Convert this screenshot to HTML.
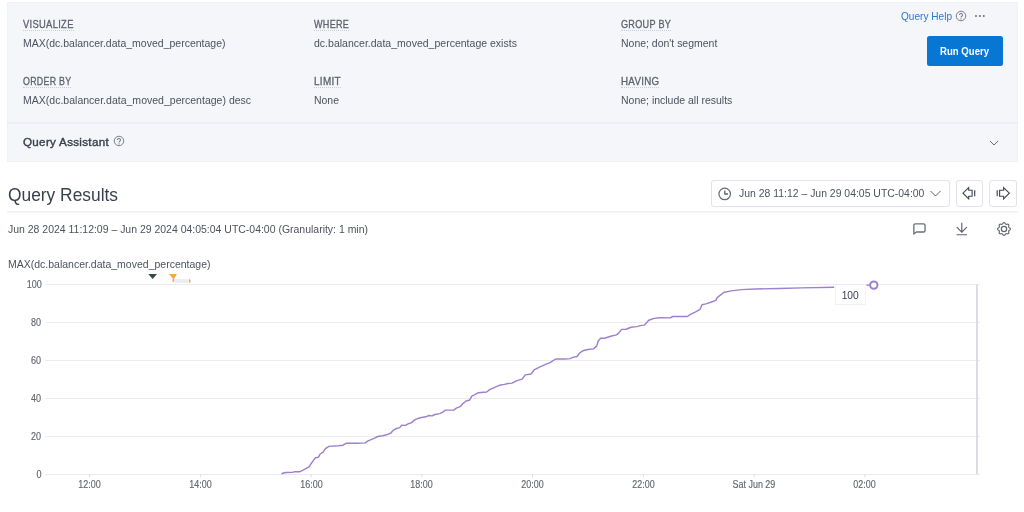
<!DOCTYPE html>
<html><head><meta charset="utf-8"><style>
html,body{margin:0;padding:0;width:1024px;height:512px;overflow:hidden;background:#fff;}
body{position:relative;font-family:"Liberation Sans",sans-serif;}
.t{position:absolute;white-space:nowrap;}
#w{position:absolute;left:0;top:0;width:1024px;height:512px;background:#fff;filter:blur(0.45px);}
</style></head><body><div id="w">
<div style="position:absolute;left:7px;top:2px;width:1011px;height:159.5px;background:#f5f6fa;box-sizing:border-box;border:1px solid #f1f2f6;"></div>
<svg style="position:absolute;left:0;top:0" width="1024" height="512"><line x1="7" y1="123" x2="1018" y2="123" stroke="#e5e7ed" stroke-width="1"/><line x1="7" y1="211.9" x2="1018" y2="211.9" stroke="#e7e9ef" stroke-width="1"/></svg>
<div class="t" style="left:23.00px;top:17.50px;font-size:10.5px;line-height:12.6px;color:#5d626d;font-weight:400;transform:scaleX(0.8919);transform-origin:left top;-webkit-text-stroke:0.3px #5d626d;letter-spacing:0.35px;">VISUALIZE</div>
<div style="position:absolute;left:23.0px;top:29.8px;width:50.7px;height:0;border-top:1px dotted #c9ccd4;"></div>
<div class="t" style="left:314.10px;top:17.50px;font-size:10.5px;line-height:12.6px;color:#5d626d;font-weight:400;transform:scaleX(0.8618);transform-origin:left top;-webkit-text-stroke:0.3px #5d626d;letter-spacing:0.35px;">WHERE</div>
<div style="position:absolute;left:314.1px;top:29.8px;width:35.2px;height:0;border-top:1px dotted #c9ccd4;"></div>
<div class="t" style="left:620.70px;top:17.50px;font-size:10.5px;line-height:12.6px;color:#5d626d;font-weight:400;transform:scaleX(0.8648);transform-origin:left top;-webkit-text-stroke:0.3px #5d626d;letter-spacing:0.35px;">GROUP BY</div>
<div style="position:absolute;left:620.7px;top:29.8px;width:50.2px;height:0;border-top:1px dotted #c9ccd4;"></div>
<div class="t" style="left:23.00px;top:74.50px;font-size:10.5px;line-height:12.6px;color:#5d626d;font-weight:400;transform:scaleX(0.8395);transform-origin:left top;-webkit-text-stroke:0.3px #5d626d;letter-spacing:0.35px;">ORDER BY</div>
<div style="position:absolute;left:23.0px;top:86.8px;width:48.4px;height:0;border-top:1px dotted #c9ccd4;"></div>
<div class="t" style="left:314.10px;top:74.50px;font-size:10.5px;line-height:12.6px;color:#5d626d;font-weight:400;transform:scaleX(0.9443);transform-origin:left top;-webkit-text-stroke:0.3px #5d626d;letter-spacing:0.35px;">LIMIT</div>
<div style="position:absolute;left:314.1px;top:86.8px;width:27.0px;height:0;border-top:1px dotted #c9ccd4;"></div>
<div class="t" style="left:620.70px;top:74.50px;font-size:10.5px;line-height:12.6px;color:#5d626d;font-weight:400;transform:scaleX(0.9260);transform-origin:left top;-webkit-text-stroke:0.3px #5d626d;letter-spacing:0.35px;">HAVING</div>
<div style="position:absolute;left:620.7px;top:86.8px;width:38.5px;height:0;border-top:1px dotted #c9ccd4;"></div>
<div class="t" style="left:22.90px;top:37.20px;font-size:11px;line-height:13.2px;color:#4d525c;font-weight:400;transform:scaleX(0.9543);transform-origin:left top;">MAX(dc.balancer.data_moved_percentage)</div>
<div class="t" style="left:314.00px;top:37.20px;font-size:11px;line-height:13.2px;color:#4d525c;font-weight:400;transform:scaleX(0.9562);transform-origin:left top;">dc.balancer.data_moved_percentage exists</div>
<div class="t" style="left:620.70px;top:37.20px;font-size:11px;line-height:13.2px;color:#4d525c;font-weight:400;transform:scaleX(0.9518);transform-origin:left top;">None; don't segment</div>
<div class="t" style="left:22.90px;top:94.40px;font-size:11px;line-height:13.2px;color:#4d525c;font-weight:400;transform:scaleX(0.9565);transform-origin:left top;">MAX(dc.balancer.data_moved_percentage) desc</div>
<div class="t" style="left:314.00px;top:94.40px;font-size:11px;line-height:13.2px;color:#4d525c;font-weight:400;transform:scaleX(0.9507);transform-origin:left top;">None</div>
<div class="t" style="left:620.70px;top:94.40px;font-size:11px;line-height:13.2px;color:#4d525c;font-weight:400;transform:scaleX(0.9529);transform-origin:left top;">None; include all results</div>
<div class="t" style="left:901.20px;top:10.30px;font-size:10.5px;line-height:12.6px;color:#2a78cc;font-weight:400;transform:scaleX(0.9603);transform-origin:left top;">Query Help</div>
<svg style="position:absolute;left:954.5px;top:10px" width="12" height="12" viewBox="0 0 12 12"><circle cx="6" cy="6" r="4.75" fill="none" stroke="#7b7f89" stroke-width="1"/><path d="M4.5 4.9 A1.5 1.5 0 1 1 6.6 6.3 Q6.1 6.6 6.1 7.5" fill="none" stroke="#7b7f89" stroke-width="1.05"/><circle cx="6.05" cy="8.9" r="0.65" fill="#7b7f89"/></svg>
<svg style="position:absolute;left:973px;top:13px" width="14" height="6" viewBox="0 0 14 6"><circle cx="3" cy="3" r="0.95" fill="#62666f"/><circle cx="6.9" cy="3" r="0.95" fill="#62666f"/><circle cx="10.8" cy="3" r="0.95" fill="#62666f"/></svg>
<div style="position:absolute;left:927px;top:36px;width:75.5px;height:30px;background:#0876d3;border-radius:2.5px;"></div>
<div class="t" style="left:939.19px;top:46.00px;font-size:10px;line-height:12.0px;color:#ffffff;font-weight:700;transform:scaleX(0.9584);transform-origin:center top;">Run Query</div>
<div class="t" style="left:22.60px;top:135.60px;font-size:11.3px;line-height:13.56px;color:#3a404c;font-weight:400;transform:scaleX(1.0284);transform-origin:left top;-webkit-text-stroke:0.4px #3a404c;letter-spacing:0.3px;">Query Assistant</div>
<svg style="position:absolute;left:113.1px;top:134.7px" width="12" height="12" viewBox="0 0 12 12"><circle cx="6" cy="6" r="4.75" fill="none" stroke="#7b7f89" stroke-width="1"/><path d="M4.5 4.9 A1.5 1.5 0 1 1 6.6 6.3 Q6.1 6.6 6.1 7.5" fill="none" stroke="#7b7f89" stroke-width="1.05"/><circle cx="6.05" cy="8.9" r="0.65" fill="#7b7f89"/></svg>
<svg style="position:absolute;left:988px;top:138px" width="12" height="8" viewBox="0 0 12 8"><path d="M1.9 2.9 L6 7 L10.1 2.9" fill="none" stroke="#676b75" stroke-width="1.0"/></svg>
<div class="t" style="left:8.00px;top:185.00px;font-size:18px;line-height:21.6px;color:#3a404c;font-weight:400;transform:scaleX(0.9645);transform-origin:left top;">Query Results</div>
<div class="t" style="left:8.00px;top:222.70px;font-size:11px;line-height:13.2px;color:#4d525c;font-weight:400;transform:scaleX(0.9516);transform-origin:left top;">Jun 28 2024 11:12:09 – Jun 29 2024 04:05:04 UTC-04:00 (Granularity: 1 min)</div>
<div style="position:absolute;left:710.5px;top:180px;width:237.5px;height:25px;border:1px solid #e1e3ea;border-radius:3px;background:#fff;"></div>
<svg style="position:absolute;left:717px;top:185.5px" width="15" height="15" viewBox="0 0 15 15"><circle cx="7.7" cy="7.9" r="5.75" fill="none" stroke="#666a74" stroke-width="1.2"/><path d="M7.8 4.6 V8 H11" fill="none" stroke="#62666f" stroke-width="1.35"/></svg>
<div class="t" style="left:739.00px;top:187.30px;font-size:11px;line-height:13.2px;color:#4d525c;font-weight:400;transform:scaleX(0.9483);transform-origin:left top;">Jun 28 11:12 – Jun 29 04:05 UTC-04:00</div>
<svg style="position:absolute;left:929px;top:188px" width="13" height="10" viewBox="0 0 13 10"><path d="M1.5 3 L6.5 8 L11.5 3" fill="none" stroke="#5d626d" stroke-width="1"/></svg>
<div style="position:absolute;left:955.5px;top:179.5px;width:25.5px;height:25.5px;border:1px solid #e1e3ea;border-radius:3px;background:#fff;"></div>
<div style="position:absolute;left:989px;top:179.5px;width:25.5px;height:25.5px;border:1px solid #e1e3ea;border-radius:3px;background:#fff;"></div>
<svg style="position:absolute;left:961px;top:186px" width="16" height="15" viewBox="0 0 16 15"><path d="M2 7.2 L7.7 1.6 V4.2 H11.1 V10.2 H7.7 V12.9 Z" fill="none" stroke="#454a55" stroke-width="1.15" stroke-linejoin="miter"/><path d="M13.7 4.2 V10.2" stroke="#454a55" stroke-width="1.2"/></svg>
<svg style="position:absolute;left:995px;top:186px" width="16" height="15" viewBox="0 0 16 15"><path d="M14.3 7.2 L8.6 1.6 V4.2 H4.6 V10.2 H8.6 V12.9 Z" fill="none" stroke="#454a55" stroke-width="1.15" stroke-linejoin="miter"/><path d="M2.2 4.2 V10.2" stroke="#454a55" stroke-width="1.2"/></svg>
<svg style="position:absolute;left:912px;top:222px" width="15" height="14" viewBox="0 0 15 14"><path d="M3.35 1.85 H11.55 Q13.05 1.85 13.05 3.35 V8.45 Q13.05 9.95 11.55 9.95 H4.4 L1.85 12 V3.35 Q1.85 1.85 3.35 1.85 Z" fill="none" stroke="#6d717b" stroke-width="1.35" stroke-linejoin="round"/></svg>
<svg style="position:absolute;left:954px;top:221px" width="15" height="15" viewBox="0 0 15 15"><path d="M7.8 1.8 V11.2 M2.8 6.2 L7.8 11.2 L12.8 6.2 M2.6 13.7 H13" fill="none" stroke="#5d626d" stroke-width="1.15"/></svg>
<svg style="position:absolute;left:996.35px;top:221px" width="16" height="16" viewBox="0 0 16 16"><path d="M8.00,1.60 L8.41,1.70 L8.79,1.98 L9.12,2.36 L9.40,2.76 L9.67,3.09 L9.95,3.29 L10.29,3.35 L10.71,3.30 L11.19,3.22 L11.70,3.18 L12.16,3.25 L12.53,3.47 L12.75,3.84 L12.82,4.30 L12.78,4.81 L12.70,5.29 L12.65,5.71 L12.71,6.05 L12.91,6.33 L13.24,6.60 L13.64,6.88 L14.02,7.21 L14.30,7.59 L14.40,8.00 L14.30,8.41 L14.02,8.79 L13.64,9.12 L13.24,9.40 L12.91,9.67 L12.71,9.95 L12.65,10.29 L12.70,10.71 L12.78,11.19 L12.82,11.70 L12.75,12.16 L12.53,12.53 L12.16,12.75 L11.70,12.82 L11.19,12.78 L10.71,12.70 L10.29,12.65 L9.95,12.71 L9.67,12.91 L9.40,13.24 L9.12,13.64 L8.79,14.02 L8.41,14.30 L8.00,14.40 L7.59,14.30 L7.21,14.02 L6.88,13.64 L6.60,13.24 L6.33,12.91 L6.05,12.71 L5.71,12.65 L5.29,12.70 L4.81,12.78 L4.30,12.82 L3.84,12.75 L3.47,12.53 L3.25,12.16 L3.18,11.70 L3.22,11.19 L3.30,10.71 L3.35,10.29 L3.29,9.95 L3.09,9.67 L2.76,9.40 L2.36,9.12 L1.98,8.79 L1.70,8.41 L1.60,8.00 L1.70,7.59 L1.98,7.21 L2.36,6.88 L2.76,6.60 L3.09,6.33 L3.29,6.05 L3.35,5.71 L3.30,5.29 L3.22,4.81 L3.18,4.30 L3.25,3.84 L3.47,3.47 L3.84,3.25 L4.30,3.18 L4.81,3.22 L5.29,3.30 L5.71,3.35 L6.05,3.29 L6.33,3.09 L6.60,2.76 L6.88,2.36 L7.21,1.98 L7.59,1.70 Z" fill="none" stroke="#62666f" stroke-width="1.15" stroke-linejoin="round"/><circle cx="8" cy="8" r="2.65" fill="none" stroke="#62666f" stroke-width="1.25"/></svg>
<div class="t" style="left:8.00px;top:257.90px;font-size:11px;line-height:13.2px;color:#4d525c;font-weight:400;transform:scaleX(0.9543);transform-origin:left top;">MAX(dc.balancer.data_moved_percentage)</div>
<svg style="position:absolute;left:0;top:0" width="1024" height="512" viewBox="0 0 1024 512"><line x1="45.4" y1="284.50" x2="980" y2="284.50" stroke="#ebecf2" stroke-width="1"/><line x1="45.4" y1="322.50" x2="980" y2="322.50" stroke="#ebecf2" stroke-width="1"/><line x1="45.4" y1="360.50" x2="980" y2="360.50" stroke="#ebecf2" stroke-width="1"/><line x1="45.4" y1="398.50" x2="980" y2="398.50" stroke="#ebecf2" stroke-width="1"/><line x1="45.4" y1="436.50" x2="980" y2="436.50" stroke="#ebecf2" stroke-width="1"/><line x1="45.4" y1="474.50" x2="980" y2="474.50" stroke="#e8e9f0" stroke-width="1"/><line x1="977" y1="284.6" x2="977" y2="474" stroke="#d8dae2" stroke-width="1.8"/><line x1="89.6" y1="474" x2="89.6" y2="477.5" stroke="#dfe1e8" stroke-width="1"/><line x1="200.4" y1="474" x2="200.4" y2="477.5" stroke="#dfe1e8" stroke-width="1"/><line x1="311.1" y1="474" x2="311.1" y2="477.5" stroke="#dfe1e8" stroke-width="1"/><line x1="421.9" y1="474" x2="421.9" y2="477.5" stroke="#dfe1e8" stroke-width="1"/><line x1="532.6" y1="474" x2="532.6" y2="477.5" stroke="#dfe1e8" stroke-width="1"/><line x1="643.4" y1="474" x2="643.4" y2="477.5" stroke="#dfe1e8" stroke-width="1"/><line x1="754.2" y1="474" x2="754.2" y2="477.5" stroke="#dfe1e8" stroke-width="1"/><line x1="864.9" y1="474" x2="864.9" y2="477.5" stroke="#dfe1e8" stroke-width="1"/><polyline points="281.4,473.7 285.5,472.5 292.6,472.4 294.9,471.6 299.6,471.8 303.1,470.2 309.0,466.9 312.5,461.6 315.4,457.7 318.4,457.3 320.1,454.0 323.1,452.2 325.4,448.7 328.9,446.4 338.3,445.8 343.0,445.2 346.5,443.2 357.0,443.2 365.3,442.9 367.6,441.1 374.6,438.2 377.6,436.5 382.7,435.8 386.5,434.8 390.9,433.0 393.5,430.1 396.6,428.5 399.8,427.6 401.7,425.3 405.5,425.4 408.1,423.8 411.2,422.9 415.0,419.6 420.1,417.8 425.8,416.8 429.0,415.5 432.2,415.9 434.7,414.5 439.8,413.6 442.3,412.4 445.5,410.1 453.8,410.1 456.3,408.2 460.1,406.7 462.6,403.9 466.4,400.7 469.4,400.3 472.0,395.8 474.5,394.8 478.3,392.7 486.6,392.0 489.7,389.7 494.2,387.6 499.3,385.3 504.3,384.4 508.1,383.5 512.0,383.1 517.0,380.6 522.1,379.1 525.3,374.9 531.0,374.0 534.2,369.8 539.9,366.9 546.2,364.1 550.0,362.6 555.7,359.0 564.6,359.0 570.2,358.6 572.7,357.4 577.1,356.5 579.7,353.0 582.8,350.8 587.9,349.5 593.6,348.9 596.8,345.9 598.1,341.2 600.6,338.3 604.4,338.3 610.8,336.2 616.5,334.9 619.0,332.7 621.5,329.4 626.0,329.2 631.1,327.3 636.8,326.6 641.2,325.4 644.4,325.1 648.8,320.3 653.9,318.4 660.0,317.8 670.2,317.9 672.8,316.5 687.4,316.5 690.5,314.3 695.6,311.8 700.1,309.3 702.0,304.8 705.8,303.9 710.8,302.3 715.9,300.4 717.2,297.6 721.0,294.7 723.5,292.5 731.1,290.9 741.3,289.6 755.0,289.0 779.3,288.5 801.3,287.9 834.2,287.3" fill="none" stroke="#9c81cf" stroke-width="1.45" stroke-linejoin="round"/><path d="M866.5 285.2 L870 285.1" stroke="#9c81cf" stroke-width="1.45"/><circle cx="873.8" cy="285.1" r="3.7" fill="#fff" stroke="#9c81cf" stroke-width="2"/><path d="M148.3 274 H157 L152.6 278.9 Z" fill="#3d434f"/><path d="M169 273.9 H177 L174.3 278.3 V281.8 H172.6 V278.3 Z" fill="#f9a93b"/><rect x="174.6" y="279" width="14" height="4" fill="#ecedf2"/><path d="M189 278.6 L191 280.9 L189 283.2 Z" fill="#f9a93b"/></svg>
<div style="position:absolute;left:834.7px;top:286px;width:31.8px;height:19.2px;background:#fff;border:1px solid #f1f2f5;border-top-color:transparent;box-sizing:border-box;"></div>
<div class="t" style="left:841.42px;top:288.60px;font-size:11px;line-height:13.2px;color:#3a404c;font-weight:400;transform:scaleX(0.9314);transform-origin:center top;">100</div>
<div class="t" style="left:24.81px;top:278.90px;font-size:10px;line-height:12.0px;color:#62666f;font-weight:400;transform:scaleX(0.9000);transform-origin:right top;-webkit-text-stroke:0.15px #62666f;">100</div>
<div class="t" style="left:30.38px;top:316.90px;font-size:10px;line-height:12.0px;color:#62666f;font-weight:400;transform:scaleX(0.9000);transform-origin:right top;-webkit-text-stroke:0.15px #62666f;">80</div>
<div class="t" style="left:30.38px;top:354.90px;font-size:10px;line-height:12.0px;color:#62666f;font-weight:400;transform:scaleX(0.9000);transform-origin:right top;-webkit-text-stroke:0.15px #62666f;">60</div>
<div class="t" style="left:30.38px;top:392.90px;font-size:10px;line-height:12.0px;color:#62666f;font-weight:400;transform:scaleX(0.9000);transform-origin:right top;-webkit-text-stroke:0.15px #62666f;">40</div>
<div class="t" style="left:30.38px;top:430.90px;font-size:10px;line-height:12.0px;color:#62666f;font-weight:400;transform:scaleX(0.9000);transform-origin:right top;-webkit-text-stroke:0.15px #62666f;">20</div>
<div class="t" style="left:35.94px;top:468.90px;font-size:10px;line-height:12.0px;color:#62666f;font-weight:400;transform:scaleX(0.9000);transform-origin:right top;-webkit-text-stroke:0.15px #62666f;">0</div>
<div class="t" style="left:77.08px;top:478.80px;font-size:10px;line-height:12.0px;color:#62666f;font-weight:400;transform:scaleX(0.8950);transform-origin:center top;-webkit-text-stroke:0.15px #62666f;">12:00</div>
<div class="t" style="left:187.88px;top:478.80px;font-size:10px;line-height:12.0px;color:#62666f;font-weight:400;transform:scaleX(0.8950);transform-origin:center top;-webkit-text-stroke:0.15px #62666f;">14:00</div>
<div class="t" style="left:298.58px;top:478.80px;font-size:10px;line-height:12.0px;color:#62666f;font-weight:400;transform:scaleX(0.8950);transform-origin:center top;-webkit-text-stroke:0.15px #62666f;">16:00</div>
<div class="t" style="left:409.38px;top:478.80px;font-size:10px;line-height:12.0px;color:#62666f;font-weight:400;transform:scaleX(0.8950);transform-origin:center top;-webkit-text-stroke:0.15px #62666f;">18:00</div>
<div class="t" style="left:520.08px;top:478.80px;font-size:10px;line-height:12.0px;color:#62666f;font-weight:400;transform:scaleX(0.8950);transform-origin:center top;-webkit-text-stroke:0.15px #62666f;">20:00</div>
<div class="t" style="left:630.88px;top:478.80px;font-size:10px;line-height:12.0px;color:#62666f;font-weight:400;transform:scaleX(0.8950);transform-origin:center top;-webkit-text-stroke:0.15px #62666f;">22:00</div>
<div class="t" style="left:730.29px;top:478.80px;font-size:10px;line-height:12.0px;color:#62666f;font-weight:400;transform:scaleX(0.8950);transform-origin:center top;-webkit-text-stroke:0.15px #62666f;">Sat Jun 29</div>
<div class="t" style="left:852.38px;top:478.80px;font-size:10px;line-height:12.0px;color:#62666f;font-weight:400;transform:scaleX(0.8950);transform-origin:center top;-webkit-text-stroke:0.15px #62666f;">02:00</div>
</div></body></html>
